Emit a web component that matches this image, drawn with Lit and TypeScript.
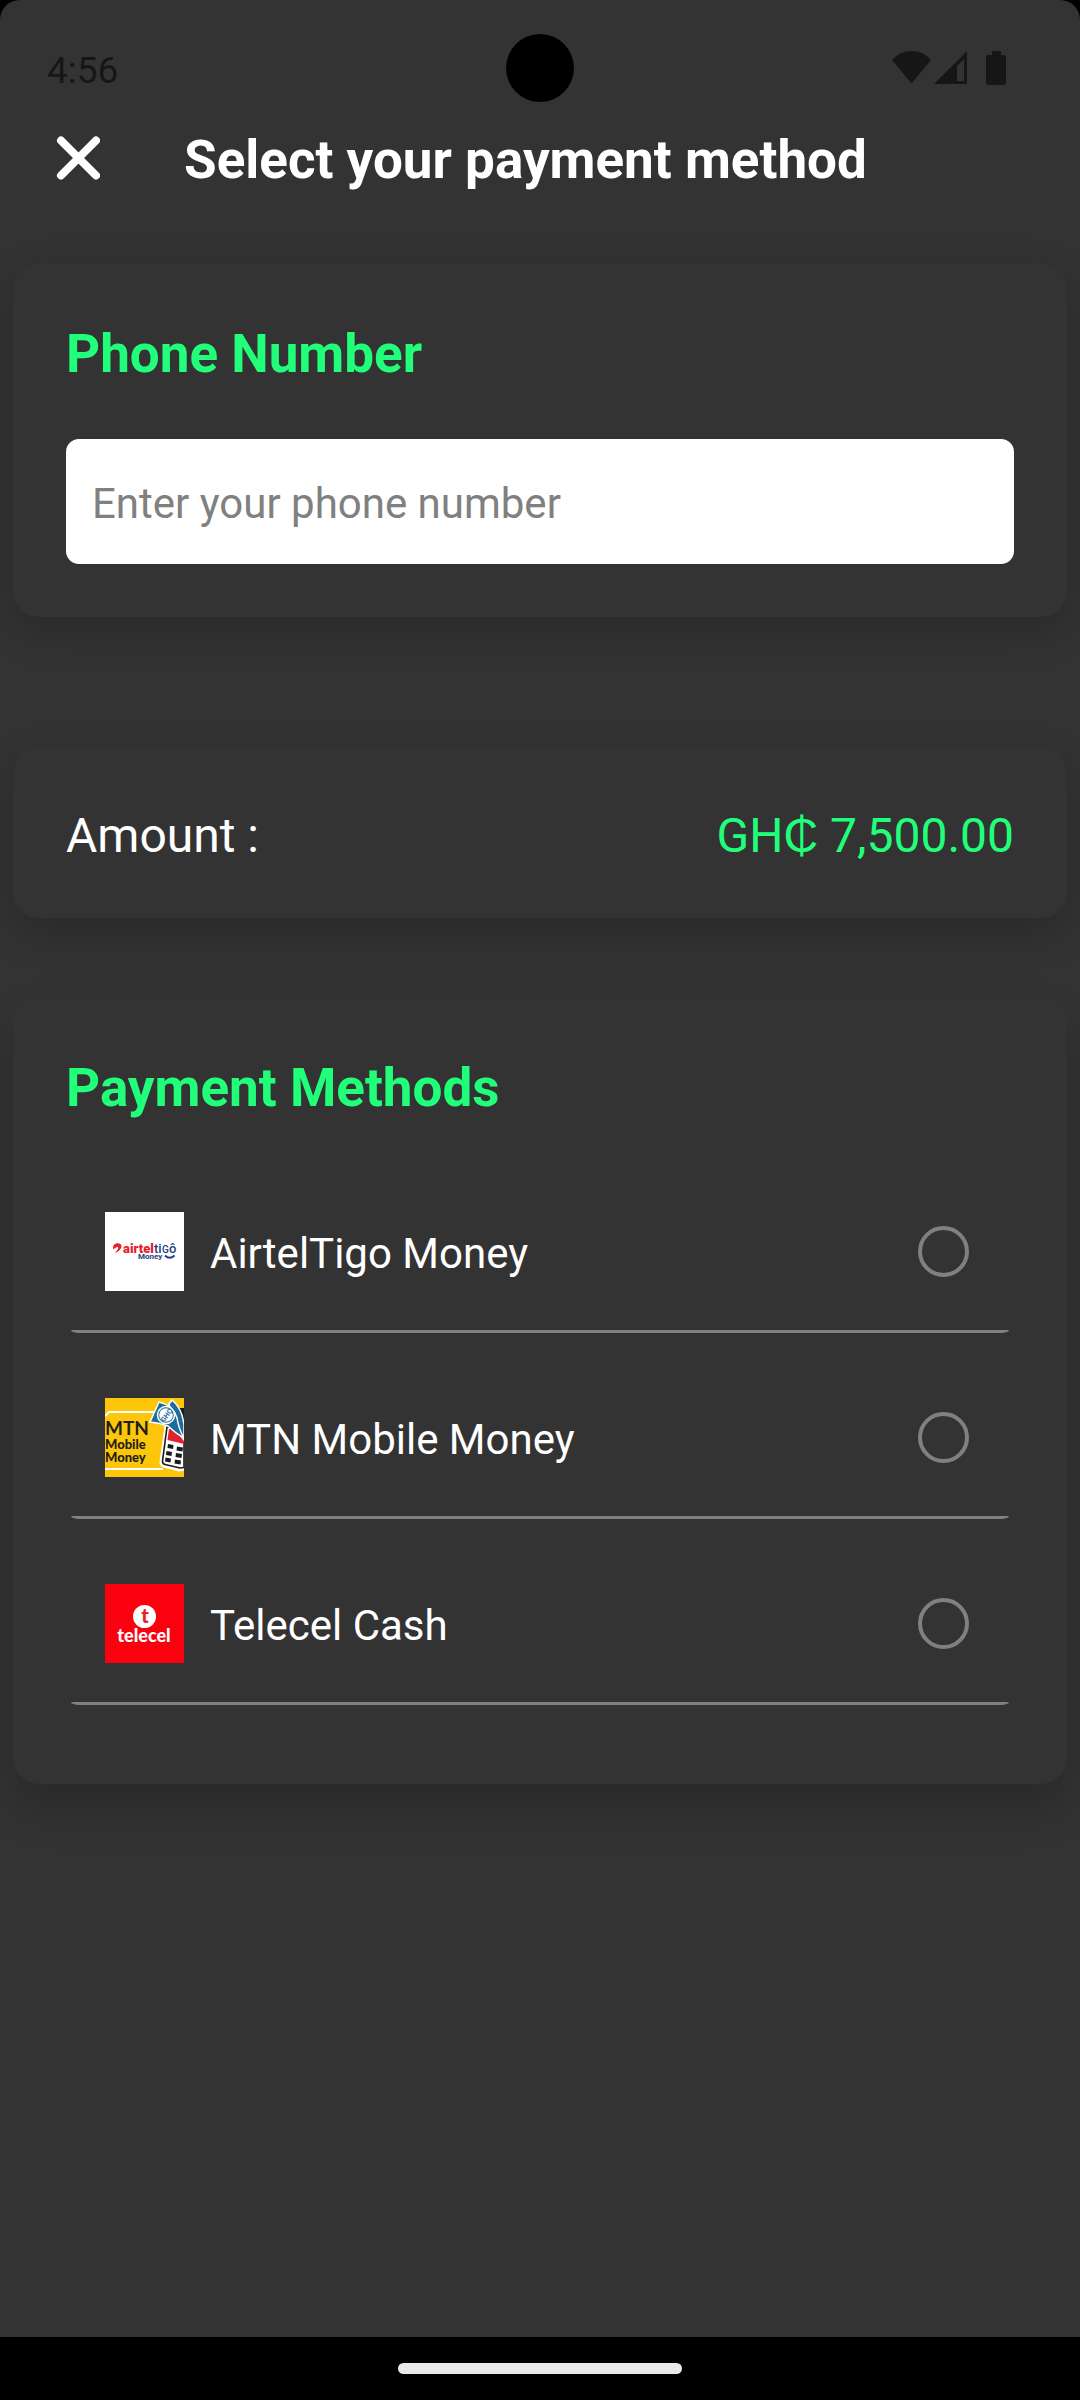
import { LitElement, html, css, svg, type SVGTemplateResult } from "lit";
import { customElement, state } from "lit/decorators.js";

interface Method {
  id: string;
  name: string;
  logo: SVGTemplateResult;
}

const airtelTigoLogo = svg`
  <rect width="79" height="79" fill="#fff" />
  <path d="M8.500 37.500C7 33.500 10 31 13 31.200C16.500 31.400 17.500 34.500 15.500 37C14 39 11.500 40.500 10.200 41.200C10.500 39.500 13.500 37.600 13.300 35.700C13 34.300 10.500 35 8.500 37.500Z" fill="#e8202a" />
  <text x="18" y="41" font-family="Roboto, sans-serif" font-size="13" font-weight="900" fill="#e8202a">airtel</text>
  <text x="49" y="41" font-family="Roboto, sans-serif" font-size="13" font-weight="500" fill="#24407f">ti</text>
  <text x="57" y="41" font-family="Roboto, sans-serif" font-size="10" font-weight="500" fill="#24407f">G</text>
  <text x="64" y="41" font-family="Roboto, sans-serif" font-size="13" font-weight="500" fill="#24407f">ô</text>
  <path d="M60 43.500Q64.500 48 69.500 43.500" fill="none" stroke="#24407f" stroke-width="2" />
  <text x="33" y="47" font-family="Roboto, sans-serif" font-size="8" font-weight="700" fill="#24407f">Money</text>`;

const mtnLogo = svg`
  <rect width="79" height="79" fill="#fdc60b" />
  <path d="M0 18L4 14H50M0 71H58" fill="none" stroke="#fff" stroke-width="2" />
  <g fill="#231f14" font-family="Lato, sans-serif">
    <text x="0" y="37" font-size="19" font-weight="700">MTN</text>
    <text x="0" y="51" font-size="13" font-weight="900">Mobile</text>
    <text x="0" y="64" font-size="13" font-weight="900">Money</text>
  </g>
  <path d="M74 10H79V22H74Z" fill="#1b1b1b" />
  <path d="M61 28L56 64Q56 67 59 68L74 72L79 71V28Z" fill="#fff" stroke="#fff" stroke-width="3" />
  <path d="M62 29L57.500 63Q57.500 66 60 66.500L75 70L79 69.500V29Z" fill="#fff" stroke="#1b1b1b" stroke-width="1.600" />
  <path d="M64 31H79V46L62.500 42Z" fill="#e0232e" />
  <path d="M63 46l5.500 1-.5 4-5.500-1zM72 48.500l6 1-.5 4-6-1zM61.500 53l5.500 1-.5 4-5.500-1zM71 55l6 1-.5 4-6-1zM60.500 59.500l5.500 1-.5 4-5.500-1zM70 61.500l6 1-.5 4-6-1z" fill="#1b1b1b" />
  <path d="M64 6L67 2Q74 8 77 17L79 26V42Q72 34 68 22Z" fill="#1d6d9b" stroke="#fff" stroke-width="1.500" />
  <path d="M45 24L54 4Q68 7 72 20Q74 32 79 40Q70 35 63 28Q55 25 45 24Z" fill="#1d6d9b" stroke="#fff" stroke-width="1.500" />
  <circle cx="61" cy="17" r="8.500" fill="#1d6d9b" stroke="#fff" stroke-width="1.500" />
  <circle cx="61" cy="17" r="6.800" fill="#fff" />
  <text x="61" y="20" transform="rotate(-52 61 17)" text-anchor="middle" font-family="Roboto, sans-serif" font-size="7" font-weight="700" fill="#1d6d9b">GHC</text>`;

const telecelLogo = svg`
  <rect width="79" height="79" fill="#fb000f" />
  <circle cx="39.500" cy="32.500" r="11.500" fill="#fff" />
  <text x="40" y="39" text-anchor="middle" font-family="Lato, sans-serif" font-size="20" font-weight="900" fill="#e8202a">t</text>
  <text x="39" y="58" text-anchor="middle" font-family="Lato, sans-serif" font-size="18" font-weight="900" fill="#fff">telecel</text>`;

const METHODS: Method[] = [
  { id: "airteltigo", name: "AirtelTigo Money", logo: airtelTigoLogo },
  { id: "mtn", name: "MTN Mobile Money", logo: mtnLogo },
  { id: "telecel", name: "Telecel Cash", logo: telecelLogo },
];

@customElement("app-root")
export class AppRoot extends LitElement {
  @state() private selected = "";

  static styles = css`
    :host {
      display: flex;
      flex-direction: column;
      min-height: 100vh;
      background: #000;
      color: #fff;
      font-family: Roboto, sans-serif;
    }
    * {
      box-sizing: border-box;
    }
    .screen {
      position: relative;
      flex: 1;
      display: flex;
      flex-direction: column;
      background: #333;
      border-radius: 20px 20px 0 0;
      overflow: hidden;
    }
    .camera {
      position: absolute;
      top: 34px;
      left: 50%;
      width: 68px;
      height: 68px;
      margin-left: -34px;
      border-radius: 50%;
      background: #000;
    }
    .status {
      display: flex;
      align-items: center;
      justify-content: space-between;
      padding: 47px 74px 0 47px;
      color: #161616;
    }
    .time {
      padding-top: 6px;
      font-size: 37px;
      line-height: 36px;
    }
    .indicators {
      display: block;
      width: 114px;
      height: 34px;
    }
    .header {
      display: flex;
      align-items: center;
      gap: 84px;
      padding: 38px 56px 0;
    }
    .close {
      display: block;
      width: 44px;
      height: 44px;
      padding: 0;
      border: 0;
      background: none;
      color: inherit;
    }
    .close svg {
      display: block;
    }
    .title {
      margin: 0;
      padding-top: 4px;
      font-size: 53px;
      font-weight: 700;
      line-height: 58px;
    }
    .content {
      display: flex;
      flex-direction: column;
      padding: 74px 13px 53px;
    }
    .card {
      padding: 53px;
      border-radius: 26px;
      background: #333;
      box-shadow: 0 14px 40px rgba(0, 0, 0, 0.2);
    }
    .amount {
      display: flex;
      justify-content: space-between;
      margin-top: 131px;
      padding: 56px 53px 50px;
      font-size: 48px;
      line-height: 64px;
    }
    .methods {
      margin-top: 79px;
      box-shadow: 0 24px 44px rgba(0, 0, 0, 0.2);
    }
    .heading {
      display: block;
      margin: 0 0 53px;
      padding-top: 6px;
      color: #21ff7a;
      font-size: 53px;
      font-weight: 700;
      line-height: 64px;
    }
    .phone {
      display: block;
      width: 100%;
      height: 125px;
      padding: 4px 26px 0;
      border: 0;
      border-radius: 13px;
      background: #fff;
      color: #222;
      font-family: inherit;
      font-size: 42px;
    }
    .phone::placeholder {
      color: #808080;
      opacity: 1;
    }
    .value {
      color: #21ff7a;
    }
    .list {
      margin: 0;
      padding: 0;
      border: 0;
    }
    .option {
      display: flex;
      align-items: center;
      margin: 0 5px 26px;
      padding: 39px 34px;
      border-bottom: 3px solid #808080;
      border-radius: 0 0 8px 8px / 0 0 3px 3px;
    }
    .logo {
      display: block;
      flex: none;
      width: 79px;
      height: 79px;
    }
    .name {
      flex: 1;
      padding: 4px 26px 0;
      font-size: 42px;
      line-height: 50px;
    }
    .radio {
      appearance: none;
      width: 51px;
      height: 51px;
      margin: 0 6px;
      border: 4px solid #808080;
      border-radius: 50%;
    }
    .radio:checked {
      border-color: #21ff7a;
      background: radial-gradient(#21ff7a 50%, transparent 54%);
    }
    .navbar {
      display: flex;
      align-items: center;
      justify-content: center;
      height: 63px;
    }
    .pill {
      width: 284px;
      height: 11px;
      border-radius: 6px;
      background: #e9e9e9;
    }
  `;

  render() {
    return html`
      <div class="screen">
        <div class="camera"></div>
        <div class="status">
          <span class="time">4:56</span>
          <svg class="indicators" viewBox="0 0 114 34" fill="currentColor" aria-hidden="true">
            <path d="M0 9Q8 0 19.500 0T39 9L19.500 32.500Z" />
            <path fill-rule="evenodd" d="M42 33L75 0V33ZM65 30H72V8L65 15Z" />
            <path d="M100 0H109V4H112Q114 4 114 6V32Q114 34 112 34H96Q94 34 94 32V6Q94 4 96 4H100Z" />
          </svg>
        </div>
        <header class="header">
          <button class="close" type="button" aria-label="Close">
            <svg width="44" height="44" viewBox="0 0 44 44" fill="none" stroke="currentColor" stroke-width="8" stroke-linecap="round">
              <path d="M5 4.500L40 39.500M40 4.500L5 39.500" />
            </svg>
          </button>
          <h1 class="title">Select your payment method</h1>
        </header>
        <main class="content">
          <section class="card">
            <label class="heading" for="phone">Phone Number</label>
            <input class="phone" id="phone" type="tel" placeholder="Enter your phone number" />
          </section>
          <section class="card amount">
            <span>Amount :</span>
            <span class="value">GH₵ 7,500.00</span>
          </section>
          <section class="card methods">
            <h2 class="heading" id="methods-title">Payment Methods</h2>
            <fieldset class="list" aria-labelledby="methods-title">
              ${METHODS.map(
                (m) => html`
                  <label class="option" for=${m.id}>
                    <svg class="logo" viewBox="0 0 79 79" aria-hidden="true">${m.logo}</svg>
                    <span class="name">${m.name}</span>
                    <input
                      class="radio"
                      type="radio"
                      name="method"
                      id=${m.id}
                      .checked=${this.selected === m.id}
                      @change=${() => (this.selected = m.id)}
                    />
                  </label>
                `,
              )}
            </fieldset>
          </section>
        </main>
      </div>
      <div class="navbar"><div class="pill"></div></div>
    `;
  }
}
